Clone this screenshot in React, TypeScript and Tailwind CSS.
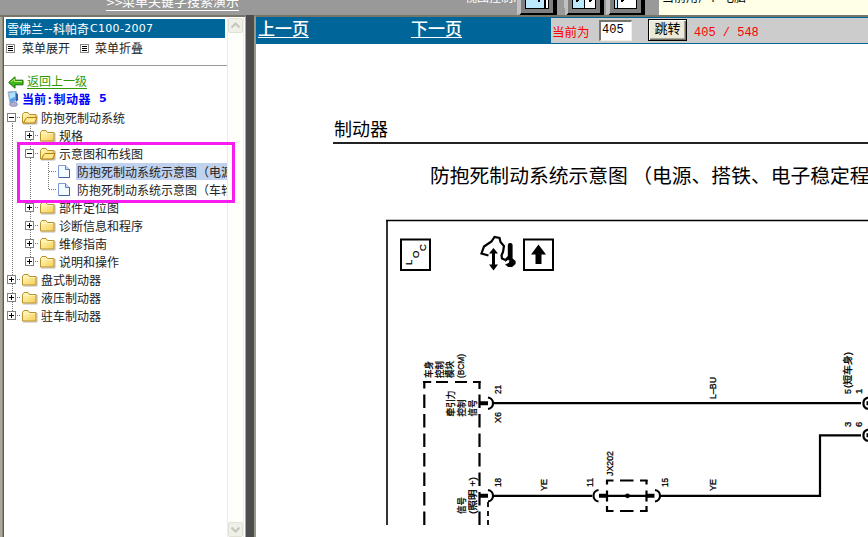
import type { ReactNode } from 'react';

const ui = "font-['Noto_Sans_CJK_SC',sans-serif]";

const VLine = ({ from = 0, to = 18 }: { from?: number; to?: number }) => (
  <path d={`M9.5 ${from}V${to}`} stroke="#777" strokeDasharray="1 1" />
);

type CellKind = 'blank' | 'line' | 'tee' | 'ell' | 'plus' | 'minus' | 'plusEnd' | 'minusTop';

function Cell({ kind }: { kind: CellKind }) {
  const box = kind === 'plus' || kind === 'minus' || kind === 'plusEnd' || kind === 'minusTop';
  const plus = kind === 'plus' || kind === 'plusEnd';
  const half = kind === 'ell' || kind === 'plusEnd';
  return (
    <svg className="h-[18px] w-[18px] shrink-0" viewBox="0 0 18 18" shapeRendering="crispEdges" fill="none">
      {kind !== 'blank' && <VLine from={kind === 'minusTop' ? 9 : 0} to={half ? 10 : 18} />}
      {kind !== 'blank' && kind !== 'line' && (
        <path d="M10 9.5H18" stroke="#777" strokeDasharray="1 1" />
      )}
      {box && <rect x="4.5" y="5.5" width="8" height="8" fill="#fff" stroke="#808080" />}
      {box && <path d="M6 9.5H11" stroke="#000" />}
      {plus && <path d="M8.5 7V12" stroke="#000" />}
    </svg>
  );
}

function Folder({ open }: { open?: boolean }) {
  return (
    <svg className="h-[18px] w-[18px] shrink-0" viewBox="0 0 18 18">
      <defs>
        <linearGradient id="folderFill" x1="0" y1="0" x2="1" y2="1">
          <stop offset="0" stopColor="#fffbc4" />
          <stop offset="1" stopColor="#f8cd52" />
        </linearGradient>
      </defs>
      <path d="M2 16h14V7" fill="none" stroke="#b9b9b9" />
      <path d="M1.5 15V6.500L3 4.500h4l1.500 2h6.500V15z" fill="url(#folderFill)" stroke="#b8912a" />
      {open && <path d="M2.500 15h11L16 9.500H6L4.500 11z" fill="#ffe78a" stroke="#b07f16" />}
      {!open && <path d="M2.500 7.500H14" stroke="#fff6bd" />}
    </svg>
  );
}

function Doc() {
  return (
    <svg className="h-[18px] w-[18px] shrink-0" viewBox="0 0 18 18">
      <path d="M1.500 3.500h7l4 4v8h-11z" fill="#f5faff" stroke="#7f9bd6" />
      <path d="M2 15.500h10.500V7" fill="none" stroke="#3f62ac" />
      <path d="M8.500 3.500v4h4" fill="#c5dcfb" stroke="#5d80c5" />
    </svg>
  );
}

type Row = { cells: CellKind[]; icon: 'open' | 'closed' | 'doc'; text: string; active?: boolean };

const rows: Row[] = [
  { cells: ['minusTop'], icon: 'open', text: '防抱死制动系统' },
  { cells: ['line', 'plus'], icon: 'closed', text: '规格' },
  { cells: ['line', 'minus'], icon: 'open', text: '示意图和布线图' },
  { cells: ['line', 'line', 'tee'], icon: 'doc', text: '防抱死制动系统示意图（电源', active: true },
  { cells: ['line', 'line', 'ell'], icon: 'doc', text: '防抱死制动系统示意图（车轮' },
  { cells: ['line', 'plus'], icon: 'closed', text: '部件定位图' },
  { cells: ['line', 'plus'], icon: 'closed', text: '诊断信息和程序' },
  { cells: ['line', 'plus'], icon: 'closed', text: '维修指南' },
  { cells: ['line', 'plusEnd'], icon: 'closed', text: '说明和操作' },
  { cells: ['plus'], icon: 'closed', text: '盘式制动器' },
  { cells: ['plus'], icon: 'closed', text: '液压制动器' },
  { cells: ['plusEnd'], icon: 'closed', text: '驻车制动器' },
];

function ListIcon() {
  return (
    <svg className="h-[9px] w-[9px] shrink-0" viewBox="0 0 9 9" shapeRendering="crispEdges">
      <rect x=".5" y=".5" width="8" height="8" fill="#fff" stroke="#888" />
      <path d="M2 2.500h5M2 4.500h5M2 6.500h5" stroke="#000" />
    </svg>
  );
}

function ScrollButton({ down }: { down?: boolean }) {
  return (
    <div className="flex h-[15px] w-[15px] shrink-0 items-center justify-center rounded-[2px] border border-[#e2e1d8] bg-[#f0f0ea]">
      <svg className="h-[7px] w-[9px]" viewBox="0 0 9 7" fill="none" stroke="#c6c5bc" strokeWidth="2">
        <path d={down ? 'M.5 1.500L4.500 5.500L8.500 1.500' : 'M.5 5.500L4.500 1.500L8.500 5.500'} />
      </svg>
    </div>
  );
}

function Sidebar() {
  return (
    <aside className="flex w-[246px] shrink-0 border-t-2 border-r border-t-[#77746a] border-r-[#aaa594] bg-white">
      <div className="w-1 shrink-0 border-r border-l-2 border-r-[#5f5c52] border-l-[#aca899] bg-[#8d897b]" />
      <div className="flex w-[223px] shrink-0 flex-col overflow-hidden">
        <div className="mt-0.5 ml-0.5 flex h-[19px] w-[219px] items-center bg-[#006699] pl-px text-xs whitespace-pre text-white">
          <span>雪佛兰</span>
          <span className="w-[10px] pl-px font-['DejaVu_Sans',sans-serif] text-[12px]">--</span>
          <span>科帕奇</span>
          <span className="ml-px pt-px font-['DejaVu_Sans',sans-serif] text-[11px] tracking-[0.3px]">C100-2007</span>
        </div>
        <div className="flex h-[20px] items-center pl-0.5 text-xs text-[#222]">
          <ListIcon />
          <span className="ml-[7px] w-[58px]">菜单展开</span>
          <ListIcon />
          <span className="ml-[6px]">菜单折叠</span>
        </div>
        <div className="mt-[7px] h-px shrink-0 bg-[#999]" />
        <div className="mt-[6px] flex h-[18px] shrink-0 items-center pl-1 text-xs text-[#339900]">
          <svg className="mt-[3px] h-[13px] w-4 shrink-0" viewBox="0 0 16 13">
            <path d="M.7 6.500L7 .8v3.400h8v4.600H7v3.400z" fill="#3eb816" stroke="#176d08" />
            <path d="M3 6L6.500 3v2.500H14" fill="none" stroke="#b9ef79" />
          </svg>
          <span className="ml-[3px] h-[15px] border-b border-[#339900] leading-[14px]">返回上一级</span>
        </div>
        <div className="flex h-[18px] shrink-0 items-center pl-[3px] text-xs font-bold text-[#0000ff]">
          <svg className="h-4 w-3 shrink-0" viewBox="0 0 12 16">
            <path d="M1 1l8-1 2 9-8 3z" fill="#5d9eea" stroke="#a9b4c8" />
            <path d="M2 2l6-1v5L3 8z" fill="#aee2ff" />
            <ellipse cx="6.500" cy="13.300" rx="4" ry="2.200" fill="#b1add1" stroke="#7774a8" strokeWidth=".6" />
            <path d="M9 2l2 1v6l-2 2z" fill="#315fae" />
          </svg>
          <span className="ml-[3px] flex w-[69px] justify-between">
            <span>当前</span>
            <span>:</span>
            <span className="tracking-[0.5px]">制动器</span>
          </span>
          <span className="ml-[8px] pt-px font-['DejaVu_Sans',sans-serif] text-[11px]">5</span>
        </div>
        <div className="flex flex-col">
          {rows.map((r) => (
            <div key={r.text} className="-ml-px flex h-[18px] items-center text-xs whitespace-pre text-[#222]">
              {r.cells.map((c, i) => (
                <Cell key={i} kind={c} />
              ))}
              {r.icon === 'doc' ? <Doc /> : <Folder open={r.icon === 'open'} />}
              <span className={r.active ? 'ml-px h-[17px] bg-[#c1d2ee] pl-px leading-[17px]' : 'ml-0.5 leading-[17px]'}>
                {r.text}
              </span>
            </div>
          ))}
        </div>
      </div>
      <div className="flex w-[17px] shrink-0 flex-col items-center justify-between border-r border-l border-[#eeede5] bg-[#fefffa] pt-px">
        <ScrollButton />
        <ScrollButton down />
      </div>
    </aside>
  );
}

function TopBar() {
  return (
    <header className="flex h-[15px] shrink-0 overflow-hidden bg-[#999]">
      <div className="ml-[106px] flex h-[11px] w-[359px] items-end text-[13px] leading-[14px] text-white">
        <span className="border-b border-white whitespace-nowrap">
          <span className="inline-block w-4 font-['DejaVu_Sans',sans-serif] text-[11px] tracking-[-1px]">&gt;&gt;</span>
          菜单关键字搜索演示
        </span>
      </div>
      <div className="flex h-[3px] w-[52px] items-end overflow-hidden text-xs leading-[13px] whitespace-nowrap text-white">视图控制:</div>
      <svg className="h-[15px] w-[142px] shrink-0" viewBox="517 0 142 15" shapeRendering="crispEdges">
        <path d="M517 0h4v13l-4 2zM564 0h4v13l-3 2zM606 0h4v13l-4 2z" fill="#c0c0c0" />
        <path d="M520 15v-1l2-1V0h35v15zM567 15v-1l1-1V0h36v15zM609 15v-1l2-1V0h34v15z" fill="#000" />
        <path d="M521 0h32v13h-32zM568 0h32v13h-32zM610 0h31v13h-31z" fill="#808080" />
        <path d="M525 0h24v9h-24zM572 0h24v9h-24zM614 0h23v9h-23z" fill="#000" />
        <path d="M526 0h18v8h-18zM573 0h11v8h-11zM615 0h2v8h-2z" fill="#bde9ff" />
        <path d="M546 0h2v8h-2zM585 0h10v8h-10zM618 0h18v8h-18z" fill="#fff" />
        <path d="M538 0h2v2h-2zM576 0h3v1h-1v1h-2zM589 0h3v1h-1v1h-2zM621 0h3v1h-1v1h-2z" fill="#000" />
      </svg>
      <div className="h-[15px] flex-1 bg-[#ffffe7]">
        <div className="ml-[3px] flex h-[3px] items-end overflow-hidden text-xs leading-[13px] whitespace-nowrap text-black">当前用户：电脑</div>
      </div>
    </header>
  );
}

function Toolbar() {
  const link = 'h-[21px] border-b border-white text-[17px] leading-[21px] font-medium text-white';
  return (
    <div className="flex h-[27px] shrink-0 bg-[#006699]">
      <div className="flex w-[295px] shrink-0 gap-[102px] pl-0.5">
        <span className={link}>上一页</span>
        <span className={link}>下一页</span>
      </div>
      <div className="my-px flex flex-1 bg-[#ccc] text-xs text-[#ff0000]">
        <span className="mt-[5px] ml-px w-[47px] text-[12.500px] leading-[17px]">当前为</span>
        <span className="mt-0.5 h-[21px] w-[33px] border-t-2 border-r border-b border-l-2 border-t-[#77756c] border-r-[#f1efe2] border-b-[#f1efe2] border-l-[#77756c] bg-white pl-px font-['Liberation_Mono',monospace] text-[12px] leading-[17px] text-black">
          405
        </span>
        <span className="mt-px ml-4 h-[22px] w-[39px] border border-black bg-[#ece9d8] text-center text-[13px] leading-[16px] text-black shadow-[inset_1px_1px_0_#fff,inset_-1px_-1px_0_#716f64,inset_-2px_-2px_0_#aca899]">
          跳转
        </span>
        <span className="mt-[8px] ml-[7px] font-['Liberation_Mono',monospace] text-[12px] leading-[15px] whitespace-pre">
          405 / 548
        </span>
      </div>
    </div>
  );
}

function Up({ x, y, len, size = 9.500, children }: { x: number; y: number; len?: number; size?: number; children: ReactNode }) {
  return (
    <text
      transform={`translate(${x} ${y}) rotate(-90)`}
      fontSize={size}
      dominantBaseline="central"
      textLength={len}
      lengthAdjust="spacingAndGlyphs"
      stroke="#000"
      strokeWidth=".3"
    >
      {children}
    </text>
  );
}

function Diagram() {
  return (
    <svg
      className="ml-[130px] h-[306px] w-[482px] shrink-0 font-['Liberation_Sans','Noto_Sans_CJK_SC',sans-serif]"
      viewBox="386 219 482 306"
    >
      <path d="M387 525V220.500" stroke="#333" strokeWidth="2" fill="none" />
      <path d="M386 220.500H868" stroke="#000" strokeWidth="1.300" />
      <g fill="none" stroke="#000" strokeWidth="2">
        <rect x="401" y="239.500" width="29" height="30.500" />
        <rect x="524" y="239.500" width="29" height="30.500" />
      </g>
      <g fontSize="9.500" stroke="#000" strokeWidth=".2">
        <text transform="translate(412 265) rotate(-90)">L</text>
        <text transform="translate(419 258) rotate(-90)">O</text>
        <text transform="translate(425.500 251) rotate(-90)">C</text>
      </g>
      <path d="M538.500 244.500l7.500 10h-4.500v9.500h-6v-9.500H531z" />
      <path
        d="M488.500 255.500L481.500 253.500L484 246.500L491.500 241.500L494.500 237L499.500 238L500.500 242L504 246L503 252L501.500 255.500L502 258.500L505.500 260"
        fill="none"
        stroke="#000"
        strokeWidth="2.200"
      />
      <path d="M493.500 248l4.500 5.500h-3v11h3l-4.500 6-4.500-6h3v-11h-3z" />
      <path d="M507.800 245q0-2 2.400-2t2.400 2v13.500l3 2.500v3l-3.500 3h-4l-3-2.500 3.500-1.500 1-2.500-1.800-.5-2.500 2-.3-3 2.800-3z" />

      <g stroke="#000" fill="none" strokeWidth="2.200">
        <path d="M424.300 381v7.500M424.300 394.500V525" strokeDasharray="13.500 6" />
        <path d="M479.500 381v8M479.500 394.500V525" strokeDasharray="13.500 6" />
        <path d="M423.200 382h8M436 382h12M455 382h12M473 382h7.600" />
        <path d="M494 403.200H861M494 495.800H592M661 495.800H820V435.300H861" />
        <path d="M488 502V525" strokeDasharray="5 4" strokeWidth="1.800" />
        <path d="M488 397.500a5.800 5.800 0 0 1 0 11.500M488 490a5.800 5.800 0 0 1 0 11.500" />
        <path d="M598.500 490a5.800 5.800 0 0 0 0 11.500M655 490a5.800 5.800 0 0 1 0 11.500" />
        <path d="M868 397.500a5.900 5.900 0 0 0 0 11.500M868 429.500a5.900 5.900 0 0 0 0 11.500" />
        <path d="M606 480.500h7.500M620 480.500h13.500M640 480.500h7.500M606 511h7.500M620 511h13.500M640 511h7.500" />
        <path d="M607 480v4.500M607 490.500v11M607 506v5.500M646.500 480v4.500M646.500 490.500v11M646.500 506v5.500" />
        <path d="M607 495.800H647" />
      </g>
      <path d="M479.500 403.200h8.500M479.500 495.800h8.500M599 495.800h8M646.500 495.800h8M866.500 403.200h2M866.500 435.300h2" stroke="#000" strokeWidth="4" />
      <circle cx="627.500" cy="495.800" r="2.400" />

      <Up x={428.500} y={378} len={17}>车身</Up>
      <Up x={439} y={378} len={17}>控制</Up>
      <Up x={449.500} y={378} len={17}>模块</Up>
      <Up x={460} y={378} len={24}>(BCM)</Up>
      <Up x={450} y={416.500} len={26}>牵引力</Up>
      <Up x={461.300} y={416.500} len={17}>控制</Up>
      <Up x={472} y={416.500} len={17}>信号</Up>
      <Up x={497.500} y={394} len={9}>21</Up>
      <Up x={497.500} y={423} len={11}>X6</Up>
      <Up x={461} y={514} len={17}>信号</Up>
      <Up x={472} y={514} len={37}>(照明 +)</Up>
      <Up x={497.500} y={487} len={9}>18</Up>
      <Up x={712} y={399} len={22}>L–BU</Up>
      <Up x={712} y={491} len={12}>YE</Up>
      <Up x={543.500} y={491} len={12}>YE</Up>
      <Up x={589} y={487} len={9}>11</Up>
      <Up x={609.500} y={476} len={25}>JX202</Up>
      <Up x={664.500} y={487} len={9}>15</Up>
      <Up x={847} y={394} len={5}>5</Up>
      <Up x={847} y={388} len={36}>(短车身)</Up>
      <Up x={858} y={394}>1</Up>
      <Up x={847} y={427}>3</Up>
      <Up x={858} y={427}>6</Up>
    </svg>
  );
}

export default function App() {
  return (
    <div className={`${ui} relative flex h-[537px] w-[868px] flex-col overflow-hidden bg-[#4d4d4d]`}>
      <TopBar />
      <div className="flex min-h-0 flex-1">
        <Sidebar />
        <div className="w-2 shrink-0 bg-[#4d4d4d]" />
        <main className="flex min-w-0 flex-1 flex-col overflow-hidden border-t-2 border-l-2 border-t-[#77746a] border-l-[#9b9787] bg-white">
          <Toolbar />
          <h1 className="mt-[71px] ml-[77px] h-[29px] w-[535px] shrink-0 border-b-2 border-[#222] pl-px text-[18px] leading-[27px] whitespace-nowrap text-black">
            制动器
          </h1>
          <h2 className="mt-[17px] ml-[174px] h-[28px] shrink-0 text-[19.800px] leading-[28px] whitespace-nowrap text-black">
            防抱死制动系统示意图 （电源、搭铁、电子稳定程
          </h2>
          <div className="mt-[30px] flex shrink-0">
            <Diagram />
          </div>
        </main>
      </div>
      <div className="absolute top-[142px] left-[17px] h-[61px] w-[218px] border-3 border-[#f81cf0]" />
    </div>
  );
}
